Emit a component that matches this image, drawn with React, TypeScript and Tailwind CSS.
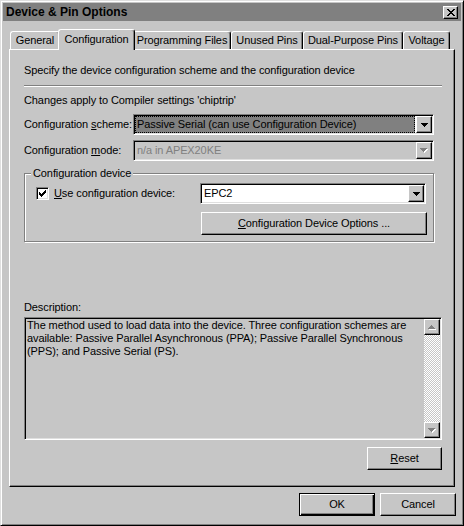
import React from 'react';

type Row = [number, number, number];

function Pix({ rows, color, w, h, shadow }: { rows: Row[]; color: string; w: number; h: number; shadow?: string }) {
  return (
    <svg width={w} height={h} viewBox={`0 0 ${w} ${h}`} shapeRendering="crispEdges" className="block">
      {shadow
        ? rows.map(([y, x, ww], i) => <rect key={'s' + i} x={x + 1} y={y + 1} width={ww} height={1} fill={shadow} />)
        : null}
      {rows.map(([y, x, ww], i) => (
        <rect key={i} x={x} y={y} width={ww} height={1} fill={color} />
      ))}
    </svg>
  );
}

const DOWN: Row[] = [
  [0, 0, 7],
  [1, 1, 5],
  [2, 2, 3],
  [3, 3, 1],
];
const UP: Row[] = [
  [0, 3, 1],
  [1, 2, 3],
  [2, 1, 5],
  [3, 0, 7],
];
const CHECK: Row[] = [
  [0, 6, 1],
  [1, 5, 2],
  [2, 0, 1],
  [2, 4, 3],
  [3, 0, 2],
  [3, 3, 3],
  [4, 0, 5],
  [5, 1, 3],
  [6, 2, 1],
];
const CLOSE: Row[] = [
  [0, 0, 2],
  [0, 6, 2],
  [1, 1, 2],
  [1, 5, 2],
  [2, 2, 4],
  [3, 3, 2],
  [4, 2, 4],
  [5, 1, 2],
  [5, 5, 2],
  [6, 0, 2],
  [6, 6, 2],
];

const raised =
  'border border-t-white border-l-white border-r-black border-b-black shadow-[inset_-1px_-1px_0_#808080]';
const sunken =
  'border border-t-[#808080] border-l-[#808080] border-r-white border-b-white shadow-[inset_1px_1px_0_#000,inset_-1px_-1px_0_#dfdfdf] p-px';

const tabs = [
  { label: 'General', cls: 'w-[50px]' },
  { label: 'Configuration', cls: 'w-[77px]', sel: true },
  { label: 'Programming Files', cls: 'w-[98px]' },
  { label: 'Unused Pins', cls: 'w-[72px]' },
  { label: 'Dual-Purpose Pins', cls: 'w-[100px]' },
  { label: 'Voltage', cls: 'w-[47px]' },
];

export default function App() {
  return (
    <div className="w-[464px] h-[526px] bg-[#c6c6c6] border border-t-[#dfdfdf] border-l-[#dfdfdf] border-r-black border-b-black shadow-[inset_1px_1px_0_#fff,inset_-1px_-1px_0_#808080] p-[2px] flex flex-col text-black text-[11px] leading-[13px] tracking-[-0.1px] font-['Liberation_Sans',Arial,sans-serif] select-none">
      {/* Title bar */}
      <div className="h-[18px] shrink-0 bg-[#808080] flex items-center justify-between pl-[3px] pr-[3px]">
        <span className="font-bold text-[12px] leading-[14px] tracking-normal">Device &amp; Pin Options</span>
        <div className={`w-[15px] h-[13px] ${raised} bg-[#c6c6c6] flex items-center justify-center`}>
          <Pix rows={CLOSE} color="#000" w={8} h={7} />
        </div>
      </div>

      {/* Tabs */}
      <div className="h-[28px] shrink-0 flex items-end pl-[7px]">
        {tabs.map((t) =>
          t.sel ? (
            <div
              key={t.label}
              className={`relative z-10 -mx-[2px] -mb-px h-[21px] ${t.cls} bg-[#c6c6c6] border-t border-l border-white border-r border-r-black shadow-[inset_-1px_0_0_#808080] rounded-t-[3px] flex items-center justify-center pb-[2px]`}
            >
              {t.label}
            </div>
          ) : (
            <div
              key={t.label}
              className={`h-[18px] ${t.cls} border-t border-l border-white border-r border-r-black shadow-[inset_-1px_0_0_#808080] rounded-t-[3px] flex items-center justify-center`}
            >
              {t.label}
            </div>
          )
        )}
      </div>

      {/* Page */}
      <div className="ml-[6px] w-[446px] h-[438px] shrink-0 border border-t-white border-l-white border-r-black border-b-black shadow-[inset_-1px_-1px_0_#808080] flex flex-col pl-[14px] pr-[12px]">
        <div className="mt-[14px] whitespace-nowrap">
          Specify the device configuration scheme and the configuration device
        </div>
        <div className="mt-[8px] h-0 border-t border-t-[#808080] border-b border-b-white" />
        <div className="mt-[7px] whitespace-nowrap">Changes apply to Compiler settings 'chiptrip'</div>

        {/* Configuration scheme */}
        <div className="mt-[7px] h-[21px] flex items-center">
          <span className="w-[109px] whitespace-nowrap">
            Configuration <u>s</u>cheme:
          </span>
          <div className={`w-[301px] h-full ${sunken} bg-white flex`}>
            <div className="flex-1 mr-px bg-[#808080] border border-dotted border-black flex items-center pl-px whitespace-nowrap">
              Passive Serial (can use Configuration Device)
            </div>
            <div className={`w-[16px] h-full ${raised} bg-[#c6c6c6] flex items-center justify-center`}>
              <Pix rows={DOWN} color="#000" w={7} h={4} />
            </div>
          </div>
        </div>

        {/* Configuration mode */}
        <div className="mt-[5px] h-[21px] flex items-center">
          <span className="w-[109px] whitespace-nowrap">
            Configuration <u>m</u>ode:
          </span>
          <div className={`w-[301px] h-full ${sunken} bg-[#c6c6c6] flex`}>
            <div className="flex-1 mr-px flex items-center pl-[2px] text-[#808080] whitespace-nowrap">
              n/a in APEX20KE
            </div>
            <div className={`w-[16px] h-full ${raised} bg-[#c6c6c6] flex items-center justify-center`}>
              <Pix rows={DOWN} color="#808080" shadow="#fff" w={8} h={5} />
            </div>
          </div>
        </div>

        {/* Group box */}
        <div className="mt-[12px] w-[410px] h-[69px] border border-[#808080] shadow-[inset_1px_1px_0_#fff,1px_1px_0_#fff] flex flex-col">
          <div className="-mt-[7px] ml-[6px] px-[2px] bg-[#c6c6c6] self-start whitespace-nowrap">
            Configuration device
          </div>
          <div className="mt-[3px] h-[21px] flex items-center pl-[11px] pr-[7px]">
            <div className={`w-[13px] h-[13px] ${sunken} bg-white flex items-center justify-center`}>
              <Pix rows={CHECK} color="#000" w={7} h={7} />
            </div>
            <span className="ml-[5px] flex-1 whitespace-nowrap">
              <u>U</u>se configuration device:
            </span>
            <div className={`w-[226px] h-full ${sunken} bg-white flex`}>
              <div className="flex-1 flex items-center pl-[2px]">EPC2</div>
              <div className={`w-[16px] h-full ${raised} bg-[#c6c6c6] flex items-center justify-center`}>
                <Pix rows={DOWN} color="#000" w={7} h={4} />
              </div>
            </div>
          </div>
          <div
            className={`self-end mt-[8px] mr-[6px] w-[226px] h-[23px] ${raised} flex items-center justify-center whitespace-nowrap`}
          >
            <span>
              <u>C</u>onfiguration Device Options ...
            </span>
          </div>
        </div>

        {/* Description */}
        <div className="mt-[59px]">Description:</div>
        <div className={`mt-[3px] h-[123px] ${sunken} flex`}>
          <div className="flex-1 pl-px whitespace-nowrap overflow-hidden">
            The method used to load data into the device. Three configuration schemes are
            <br />
            available: Passive Parallel Asynchronous (PPA); Passive Parallel Synchronous
            <br />
            (PPS); and Passive Serial (PS).
          </div>
          <div className="w-[16px] h-full flex flex-col">
            <div className={`h-[16px] shrink-0 ${raised} bg-[#c6c6c6] flex items-center justify-center`}>
              <Pix rows={UP} color="#808080" shadow="#fff" w={8} h={5} />
            </div>
            <div className="flex-1 bg-[image:conic-gradient(#fff_25%,#c6c6c6_0_50%,#fff_0_75%,#c6c6c6_0)] bg-[length:2px_2px]" />
            <div className={`h-[16px] shrink-0 ${raised} bg-[#c6c6c6] flex items-center justify-center`}>
              <Pix rows={DOWN} color="#808080" shadow="#fff" w={8} h={5} />
            </div>
          </div>
        </div>

        <div className={`self-end mt-[7px] w-[75px] h-[23px] ${raised} flex items-center justify-center`}>
          <span>
            <u>R</u>eset
          </span>
        </div>
      </div>

      {/* Bottom buttons */}
      <div className="mt-[6px] flex justify-end gap-[5px] pr-[5px]">
        <div className="w-[76px] h-[23px] border border-black shadow-[inset_1px_1px_0_#fff,inset_-1px_-1px_0_#000,inset_-2px_-2px_0_#808080] flex items-center justify-center">
          OK
        </div>
        <div className={`w-[76px] h-[23px] ${raised} flex items-center justify-center`}>Cancel</div>
      </div>
    </div>
  );
}
